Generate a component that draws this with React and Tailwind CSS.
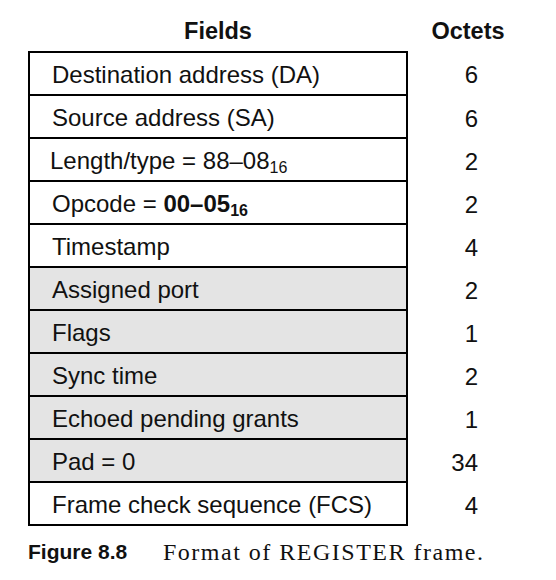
const rows = [
  { label: 'Destination address (DA)', octets: '6' },
  { label: 'Source address (SA)', octets: '6' },
  {
    label: (
      <span className="-ml-[2px]">
        Length/type = 88–08<sub className="text-[16px]">16</sub>
      </span>
    ),
    octets: '2',
  },
  {
    label: (
      <span>
        Opcode = <b>00–05<sub className="text-[16px]">16</sub></b>
      </span>
    ),
    octets: '2',
  },
  { label: 'Timestamp', octets: '4' },
  { label: 'Assigned port', octets: '2', shaded: true },
  { label: 'Flags', octets: '1', shaded: true },
  { label: 'Sync time', octets: '2', shaded: true },
  { label: 'Echoed pending grants', octets: '1', shaded: true },
  { label: 'Pad = 0', octets: '34', shaded: true },
  { label: 'Frame check sequence (FCS)', octets: '4' },
];

const App = () => {
  return (
    <div
      className="w-[556px] h-[580px] bg-white text-[#111] pt-[10px] pl-[28px]"
      style={{ fontFamily: '"Liberation Sans", Arial, sans-serif' }}
    >
      <div className="flex h-[41px] items-center text-[23.5px] font-bold leading-[28px]">
        <div className="w-[380px] text-center">Fields</div>
        <div className="w-[120px] text-center">Octets</div>
      </div>

      <div className="flex">
        <div className="w-[380px] border-2 border-black">
          {rows.map((row, i) => (
            <div
              key={i}
              className={`${i > 0 ? 'border-t-2 border-black h-[43px]' : 'h-[41px]'} ${
                row.shaded ? 'bg-[#e4e4e4]' : 'bg-white'
              } flex items-center pl-[22px] pt-[2px] text-[24px] leading-[28px]`}
            >
              {row.label}
            </div>
          ))}
        </div>
        <div className="w-[70px]">
          {rows.map((row, i) => (
            <div
              key={i}
              className={`${i > 0 ? 'h-[43px]' : 'h-[45px]'} flex items-center justify-end pt-[2px] text-[24px] leading-[28px]`}
            >
              {row.octets}
            </div>
          ))}
        </div>
      </div>

      <div className="mt-[12px] flex items-center leading-[28px]">
        <span className="text-[21px] font-bold w-[135px]">Figure 8.8</span>
        <span
          className="text-[24px] tracking-[1.5px]"
          style={{ fontFamily: '"Liberation Serif", "Times New Roman", serif' }}
        >
          Format of REGISTER frame.
        </span>
      </div>
    </div>
  );
};

export default App;
